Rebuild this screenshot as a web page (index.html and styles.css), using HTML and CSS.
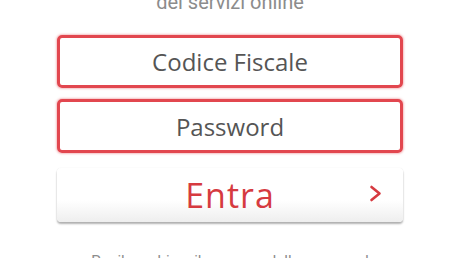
FILE: index.html
```html
<!DOCTYPE html>
<html lang="it">
<head>
<meta charset="utf-8">
<link rel="stylesheet" href="styles.css">
</head>
<body>
<div class="page">
  <p class="subtitle">dei servizi online</p>
  <div class="field">Codice Fiscale</div>
  <div class="field field-second">Password</div>
  <div class="button">
    <span class="button-label">Entra</span>
    <svg class="chevron" width="13" height="17" viewBox="0 0 13 17"><path d="M2.5 2 L10.5 8.5 L2.5 15" fill="none" stroke="#d63a40" stroke-width="2.6" stroke-linecap="round" stroke-linejoin="round"/></svg>
  </div>
  <p class="note">Per il cambio o il recupero della password</p>
</div>
</body>
</html>
```
FILE: styles.css
```css
html, body {
  margin: 0;
  padding: 0;
  background: #ffffff;
  overflow: hidden;
}
.page {
  width: 346px;
  margin: 0 auto;
  display: flex;
  flex-direction: column;
  font-family: "Open Sans", "DejaVu Sans", sans-serif;
}
.subtitle {
  margin: -8px 0 0 0;
  height: 20px;
  line-height: 20px;
  font-family: Roboto, "Open Sans", sans-serif;
  font-size: 20px;
  color: #8c8c8c;
  text-align: center;
}
.field {
  margin-top: 23px;
  height: 47px;
  border: 3px solid #e2474f;
  border-radius: 5px;
  box-shadow: 0 0 2px 1px rgba(226, 71, 79, 0.35);
  display: flex;
  align-items: center;
  justify-content: center;
  font-size: 24px;
  color: #555555;
}
.field-second {
  margin-top: 11px;
  height: 48px;
}
.button {
  margin-top: 15px;
  height: 54px;
  border-radius: 4px;
  background: linear-gradient(#ffffff 0%, #ffffff 60%, #eeeeee 100%);
  box-shadow: 0 0 1px rgba(0, 0, 0, 0.15), 0 2px 2px rgba(0, 0, 0, 0.3);
  display: flex;
  align-items: center;
  justify-content: center;
  position: relative;
}
.button-label {
  font-size: 34px;
  color: #d63a40;
  letter-spacing: 1px;
}
.chevron {
  position: absolute;
  right: 21px;
  top: 17px;
}
.note {
  margin: 30px 0 0 0;
  font-family: Roboto, "Open Sans", sans-serif;
  font-size: 15px;
  color: #8c8c8c;
  text-align: center;
  white-space: nowrap;
}
```
